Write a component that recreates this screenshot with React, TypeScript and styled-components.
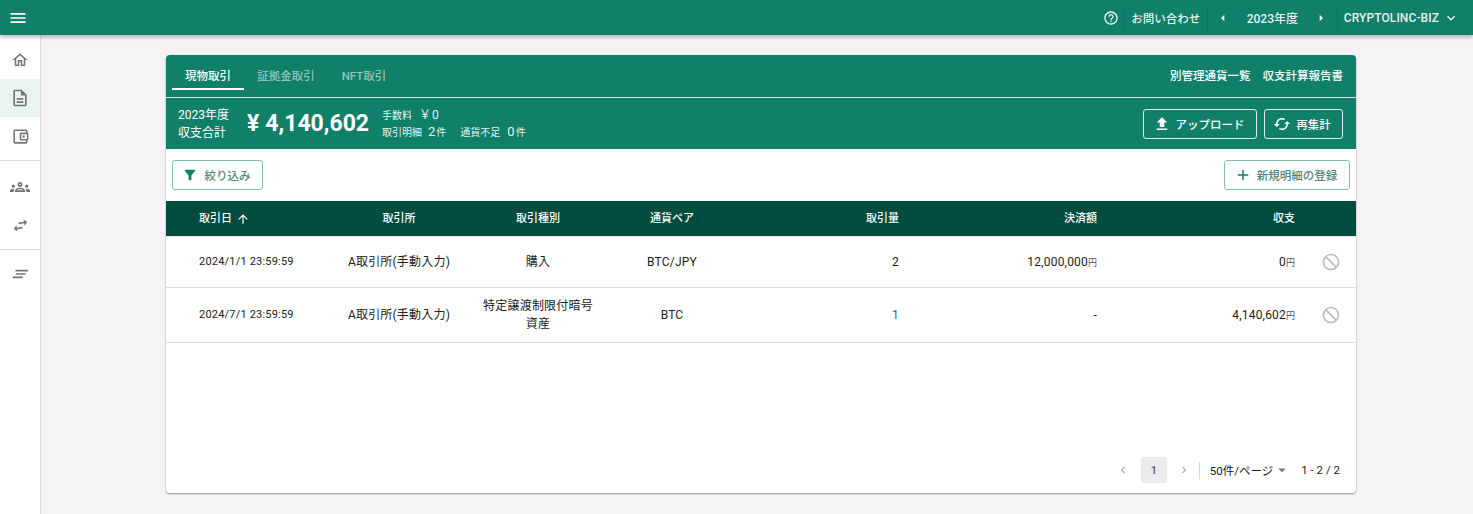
import React from "react";
import styled, { createGlobalStyle } from "styled-components";

const GREEN = "#11806a";
const DARK = "#004d40";
const FONT = `Roboto, "Noto Sans CJK JP", "Noto Sans", sans-serif`;

const Global = createGlobalStyle`
  html, body { margin: 0; padding: 0; height: 100%; background: #f4f4f4; overflow: hidden; }
  body { font-family: ${FONT}; color: #212121; }
  #root { height: 100%; }
`;

const P = {
  menu: "M3 18h18v-2H3v2zm0-5h18v-2H3v2zm0-7v2h18V6H3z",
  home: "M12 5.69l5 4.5V18h-2v-6H9v6H7v-7.81l5-4.5M12 3L2 12h3v8h6v-6h2v6h6v-8h3L12 3z",
  doc: "M8 16h8v2H8zm0-4h8v2H8zm6-10H6c-1.1 0-2 .9-2 2v16c0 1.1.89 2 1.99 2H18c1.1 0 2-.9 2-2V8l-6-6zm4 18H6V4h7v5h5v11z",
  wallet: "M21 7.28V5c0-1.1-.9-2-2-2H5c-1.11 0-2 .9-2 2v14c0 1.1.89 2 2 2h14c1.1 0 2-.9 2-2v-2.28c.59-.35 1-.98 1-1.72V9c0-.74-.41-1.37-1-1.72zM20 9v6h-7V9h7zM5 19V5h14v2h-6c-1.1 0-2 .9-2 2v6c0 1.1.9 2 2 2h6v2H5zM16 10.5a1.5 1.5 0 1 0 0 3 1.5 1.5 0 0 0 0-3z",
  groups: "M4,13c1.1,0,2-0.9,2-2c0-1.1-0.9-2-2-2s-2,0.9-2,2C2,12.1,2.9,13,4,13z M5.13,14.1C4.76,14.04,4.39,14,4,14 c-0.99,0-1.93,0.21-2.78,0.58C0.48,14.9,0,15.62,0,16.43V18l4.5,0v-1.61C4.5,15.56,4.73,14.78,5.13,14.1z M20,13c1.1,0,2-0.9,2-2 c0-1.1-0.9-2-2-2s-2,0.9-2,2C18,12.1,18.9,13,20,13z M24,16.43c0-0.81-0.48-1.53-1.22-1.85C21.93,14.21,20.99,14,20,14 c-0.39,0-0.76,0.04-1.13,0.1c0.4,0.68,0.63,1.46,0.63,2.29V18l4.5,0V16.43z M16.24,13.65c-1.17-0.52-2.61-0.9-4.24-0.9 c-1.63,0-3.07,0.39-4.24,0.9C6.68,14.13,6,15.21,6,16.39V18h12v-1.61C18,15.21,17.32,14.13,16.24,13.65z M8.07,16 c0.09-0.23,0.13-0.39,0.91-0.69c0.97-0.38,1.99-0.56,3.02-0.56s2.05,0.18,3.02,0.56c0.77,0.3,0.81,0.46,0.91,0.69H8.07z M12,8 c0.55,0,1,0.45,1,1s-0.45,1-1,1s-1-0.45-1-1S11.45,8,12,8 M12,6c-1.66,0-3,1.34-3,3c0,1.66,1.34,3,3,3s3-1.34,3-3 C15,7.34,13.66,6,12,6L12,6z",
  swap: "M6.99 11L3 15l3.99 4v-3H14v-2H6.99v-3zM21 9l-4-4v3h-7v2h7v3l4-4z",
  notes: "M5 17h12v-2H5v2zm2-4h12v-2H7v2zm-2-6v2h15V7H5z",
  help: "M11 18h2v-2h-2v2zm1-16C6.48 2 2 6.48 2 12s4.48 10 10 10 10-4.48 10-10S17.52 2 12 2zm0 18c-4.41 0-8-3.59-8-8s3.59-8 8-8 8 3.59 8 8-3.59 8-8 8zm0-14c-2.21 0-4 1.79-4 4h2c0-1.1.9-2 2-2s2 .9 2 2c0 2-3 1.75-3 5h2c0-2.25 3-2.5 3-5 0-2.21-1.79-4-4-4z",
  left: "M14 7l-5 5 5 5V7z",
  right: "M10 17l5-5-5-5v10z",
  down: "M7.41 8.59L12 13.17l4.59-4.58L18 10l-6 6-6-6 1.41-1.41z",
  upload: "M5 20h14v-2H5v2zm0-10h4v6h6v-6h4l-7-7-7 7z",
  cached: "M19 8l-4 4h3c0 3.31-2.69 6-6 6-1.01 0-1.97-.25-2.8-.7l-1.46 1.46C8.97 19.54 10.43 20 12 20c4.42 0 8-3.58 8-8h3l-4-4zM6 12c0-3.31 2.69-6 6-6 1.01 0 1.97.25 2.8.7l1.46-1.46C15.03 4.46 13.57 4 12 4c-4.42 0-8 3.58-8 8H1l4 4 4-4H6z",
  filter: "M4.25 5.61C6.27 8.2 10 13 10 13v6c0 .55.45 1 1 1h2c.55 0 1-.45 1-1v-6s3.72-4.8 5.74-7.39c.51-.66.04-1.61-.79-1.61H5.04c-.83 0-1.3.95-.79 1.61z",
  plus: "M19 13h-6v6h-2v-6H5v-2h6V5h2v6h6v2z",
  up: "M4 12l1.41 1.41L11 7.83V20h2V7.83l5.58 5.59L20 12l-8-8-8 8z",
  banned: "M12 2C6.48 2 2 6.48 2 12s4.48 10 10 10 10-4.48 10-10S17.52 2 12 2zm0 18c-4.42 0-8-3.58-8-8 0-1.85.63-3.55 1.69-4.9L16.9 18.31C15.55 19.37 13.85 20 12 20zm6.31-3.1L7.1 5.69C8.45 4.63 10.15 4 12 4c4.42 0 8 3.58 8 8 0 1.85-.63 3.55-1.69 4.9z",
  chevL: "M15.41 7.41L14 6l-6 6 6 6 1.41-1.41L10.83 12z",
  chevR: "M10 6L8.59 7.41 13.17 12l-4.58 4.59L10 18l6-6z",
  caret: "M7 10l5 5 5-5z",
};

const Svg = styled.svg<{ $size: number; $color?: string }>`
  width: ${(p) => p.$size}px;
  height: ${(p) => p.$size}px;
  fill: ${(p) => p.$color || "currentColor"};
  flex: none;
  display: block;
`;

const Icon = ({ d, size = 24, color }: { d: string; size?: number; color?: string }) => (
  <Svg viewBox="0 0 24 24" $size={size} $color={color}>
    <path d={d} />
  </Svg>
);

const Page = styled.div`
  width: 1473px;
  height: 514px;
  display: flex;
  flex-direction: column;
  overflow: hidden;
`;

const TopBar = styled.header`
  height: 35px;
  flex: none;
  background: ${GREEN};
  color: #fff;
  display: flex;
  align-items: center;
  justify-content: space-between;
  padding: 0 14px 0 8px;
  box-shadow: 0 2px 4px rgba(0, 0, 0, 0.3);
  position: relative;
  z-index: 2;
`;

const TopRight = styled.div`
  display: flex;
  align-items: center;
  height: 100%;
`;

const TopItem = styled.div<{ $w?: number; $border?: boolean }>`
  height: 26px;
  box-sizing: border-box;
  display: flex;
  align-items: center;
  justify-content: center;
  font-size: 11.5px;
  font-weight: 500;
  color: rgba(255, 255, 255, 0.92);
  ${(p) => (p.$w ? `width: ${p.$w}px;` : "")}
  ${(p) => (p.$border ? "border-left: 1px solid rgba(0,0,0,0.12);" : "")}
`;

const YearText = styled.span`
  width: 82px;
  text-align: center;
  font-size: 12px;
`;

const ClientName = styled.span`
  margin: 0 4px 0 6px;
  font-size: 12px;
  letter-spacing: 0.08px;
`;

const Body = styled.div`
  flex: 1;
  display: flex;
  min-height: 0;
`;

const Side = styled.nav`
  width: 40px;
  flex: none;
  background: #fff;
  border-right: 1px solid #dcdcdc;
  display: flex;
  flex-direction: column;
  padding-top: 6px;
`;

const SideItem = styled.div<{ $active?: boolean }>`
  height: 38px;
  display: flex;
  align-items: center;
  justify-content: center;
  background: ${(p) => (p.$active ? "#e9f3f1" : "transparent")};
  color: #757575;
`;

const SideRule = styled.hr<{ $after: number }>`
  border: 0;
  border-top: 1px solid #dedede;
  margin: 5px 0 ${(p) => p.$after}px;
  width: 100%;
`;

const Tilt = styled.span`
  display: block;
  transform: rotate(-9deg);
`;

const Slant = styled.span`
  display: block;
  transform: skewX(-22deg);
`;

const Main = styled.main`
  flex: 1;
  padding: 20px 117px 21px 125px;
  min-width: 0;
`;

const Card = styled.section`
  height: 438px;
  background: #fff;
  border-radius: 4px;
  box-shadow: 0 1px 2px rgba(0, 0, 0, 0.4);
  display: flex;
  flex-direction: column;
  overflow: hidden;
`;

const TabsRow = styled.div`
  height: 43px;
  box-sizing: border-box;
  flex: none;
  background: ${GREEN};
  border-bottom: 1px solid rgba(255, 255, 255, 0.8);
  display: flex;
  align-items: flex-end;
  justify-content: space-between;
  padding: 0 13px 0 6px;
  color: #fff;
`;

const Tabs = styled.div`
  display: flex;
  gap: 6px;
  padding-bottom: 7px;
`;

const Tab = styled.div<{ $active?: boolean }>`
  height: 34px;
  width: 72px;
  box-sizing: border-box;
  padding-top: 6px;
  display: flex;
  align-items: center;
  justify-content: center;
  font-size: 11.5px;
  font-weight: 500;
  color: ${(p) => (p.$active ? "#fff" : "rgba(255,255,255,0.55)")};
  border-bottom: 2px solid ${(p) => (p.$active ? "#fff" : "transparent")};
`;

const TabLinks = styled.div`
  display: flex;
  gap: 12px;
  font-size: 11.5px;
  font-weight: 500;
  height: 42px;
  box-sizing: border-box;
  padding-bottom: 3px;
  align-items: center;
`;

const Summary = styled.div`
  height: 51px;
  box-sizing: border-box;
  flex: none;
  background: ${GREEN};
  color: #fff;
  display: flex;
  align-items: center;
  padding: 0 13px 0 12px;
`;

const SumLabel = styled.div`
  font-size: 12px;
  line-height: 18px;
  width: 69px;
`;

const SumValue = styled.div`
  font-size: 23px;
  font-weight: 700;
  width: 135px;
  white-space: nowrap;
`;

const YenMark = styled.span`
  margin-right: 6px;
`;

const SumDetail = styled.div`
  font-size: 10px;
  flex: 1;
  color: rgba(255, 255, 255, 0.92);
`;

const DetailLine = styled.div`
  display: flex;
  align-items: baseline;
  height: 19px;
`;

const Big = styled.span<{ $ml?: number; $fs?: number }>`
  font-size: ${(p) => p.$fs ?? 13}px;
  letter-spacing: 1px;
  margin-left: ${(p) => p.$ml ?? 0}px;
`;

const DetailGap = styled.span`
  margin-left: 14px;
`;

const HeadBtn = styled.button<{ $w: number }>`
  width: ${(p) => p.$w}px;
  height: 30px;
  box-sizing: border-box;
  background: transparent;
  border: 1px solid rgba(255, 255, 255, 0.85);
  border-radius: 3px;
  color: #fff;
  display: flex;
  align-items: center;
  justify-content: center;
  gap: 5px;
  font-family: inherit;
  font-size: 11.5px;
  font-weight: 500;
  margin-left: 7px;
  padding: 0 3px 0 0;
`;

const Toolbar = styled.div`
  height: 52px;
  flex: none;
  display: flex;
  align-items: center;
  justify-content: space-between;
  padding: 0 6px;
`;

const OutlineBtn = styled.button<{ $w: number; $gap: number }>`
  width: ${(p) => p.$w}px;
  height: 30px;
  box-sizing: border-box;
  background: #fff;
  border: 1px solid #7fbfb2;
  border-radius: 3px;
  color: #55857a;
  display: flex;
  align-items: center;
  justify-content: center;
  gap: ${(p) => p.$gap}px;
  font-family: inherit;
  font-size: 11.5px;
  font-weight: 500;
  padding: 0 3px 0 0;
`;

const COLS = "164px 138px 140px 128px 163px 198px 198px 61px";

const HeadRow = styled.div`
  display: grid;
  grid-template-columns: ${COLS};
  height: 36px;
  box-sizing: border-box;
  flex: none;
  background: ${DARK};
  color: #fff;
  font-size: 11px;
  font-weight: 500;
  align-items: center;
  border-bottom: 1px solid #e6e6e6;
`;

const Row = styled.div<{ $h: number }>`
  display: grid;
  grid-template-columns: ${COLS};
  height: ${(p) => p.$h}px;
  box-sizing: border-box;
  border-bottom: 1px solid #dedede;
  align-items: center;
  font-size: 12px;
  letter-spacing: 0.2px;
  color: #212121;
  flex: none;
`;

const Cell = styled.div<{ $align?: "left" | "center" | "right"; $pl?: number; $color?: string; $size?: number }>`
  text-align: ${(p) => p.$align || "center"};
  padding-left: ${(p) => p.$pl ?? 0}px;
  ${(p) => (p.$color ? `color: ${p.$color};` : "")}
  ${(p) => (p.$size ? `font-size: ${p.$size}px;` : "")}
  line-height: 18px;
`;

const HeadDate = styled(Cell)`
  display: flex;
  align-items: center;
  gap: 4px;
`;

const Yen = styled.span`
  font-size: 9px;
  letter-spacing: 0;
  color: #555;
`;

const IconCell = styled.div`
  display: flex;
  justify-content: flex-end;
  padding-right: 15px;
`;

const TypeCell = styled(Cell)`
  padding: 0 10px;
`;

const Spacer = styled.div`
  flex: 1;
`;

const Pager = styled.div`
  height: 36px;
  flex: none;
  display: flex;
  align-items: flex-start;
  justify-content: flex-end;
  padding-right: 16px;
  font-size: 11.5px;
  color: #212121;
`;

const PageBtn = styled.div`
  width: 26px;
  height: 26px;
  border-radius: 3px;
  background: #ebebeb;
  display: flex;
  align-items: center;
  justify-content: center;
  font-size: 11px;
  font-weight: 500;
  color: #555;
`;

const Arrow = styled.div<{ $ml?: number; $mr?: number }>`
  width: 18px;
  height: 26px;
  display: flex;
  align-items: center;
  justify-content: center;
  margin-left: ${(p) => p.$ml ?? 0}px;
  margin-right: ${(p) => p.$mr ?? 0}px;
`;

const PagerRule = styled.div`
  width: 1px;
  height: 17px;
  background: #d8d8d8;
  margin: 5px 10px 0 6px;
`;

const PagerText = styled.div<{ $w?: number }>`
  height: 26px;
  display: flex;
  align-items: center;
  white-space: nowrap;
  ${(p) => (p.$w ? `width: ${p.$w}px;` : "")}
`;

const rows = [
  { date: "2024/1/1 23:59:59", type: "購入", pair: "BTC/JPY", qty: "2", blue: false, pay: "12,000,000", income: "0", h: 51 },
  { date: "2024/7/1 23:59:59", type: "特定譲渡制限付暗号資産", pair: "BTC", qty: "1", blue: true, pay: "-", income: "4,140,602", h: 55 },
];

export default function App() {
  return (
    <Page>
      <Global />
      <TopBar>
        <Icon d={P.menu} size={20} />
        <TopRight>
          <TopItem $w={25}>
            <Icon d={P.help} size={16} />
          </TopItem>
          <TopItem $w={83} $border>お問い合わせ</TopItem>
          <TopItem $w={130} $border>
            <Icon d={P.left} size={16} />
            <YearText>2023年度</YearText>
            <Icon d={P.right} size={16} />
          </TopItem>
          <TopItem $border>
            <ClientName>CRYPTOLINC-BIZ</ClientName>
            <Icon d={P.down} size={16} />
          </TopItem>
        </TopRight>
      </TopBar>
      <Body>
        <Side>
          <SideItem><Icon d={P.home} size={18} /></SideItem>
          <SideItem $active><Icon d={P.doc} size={20} /></SideItem>
          <SideItem><Icon d={P.wallet} size={19} /></SideItem>
          <SideRule $after={7} />
          <SideItem><Icon d={P.groups} size={20} /></SideItem>
          <SideItem><Tilt><Icon d={P.swap} size={19} /></Tilt></SideItem>
          <SideRule $after={5} />
          <SideItem><Slant><Icon d={P.notes} size={20} /></Slant></SideItem>
        </Side>
        <Main>
          <Card>
            <TabsRow>
              <Tabs>
                <Tab $active>現物取引</Tab>
                <Tab>証拠金取引</Tab>
                <Tab>NFT取引</Tab>
              </Tabs>
              <TabLinks>
                <span>別管理通貨一覧</span>
                <span>収支計算報告書</span>
              </TabLinks>
            </TabsRow>
            <Summary>
              <SumLabel>2023年度<br />収支合計</SumLabel>
              <SumValue><YenMark>¥</YenMark>4,140,602</SumValue>
              <SumDetail>
                <DetailLine>手数料<Big $ml={7} $fs={12}>￥0</Big></DetailLine>
                <DetailLine>
                  取引明細<Big $ml={6}>2</Big>件
                  <DetailGap>通貨不足</DetailGap><Big $ml={7}>0</Big>件
                </DetailLine>
              </SumDetail>
              <HeadBtn $w={114}><Icon d={P.upload} size={18} />アップロード</HeadBtn>
              <HeadBtn $w={79}><Icon d={P.cached} size={18} />再集計</HeadBtn>
            </Summary>
            <Toolbar>
              <OutlineBtn $w={91} $gap={7}><Icon d={P.filter} size={16} color={GREEN} />絞り込み</OutlineBtn>
              <OutlineBtn $w={126} $gap={5}><Icon d={P.plus} size={18} color={GREEN} />新規明細の登録</OutlineBtn>
            </Toolbar>
            <HeadRow>
              <HeadDate $pl={33} $align="left">取引日<Icon d={P.up} size={14} /></HeadDate>
              <Cell>取引所</Cell>
              <Cell>取引種別</Cell>
              <Cell>通貨ペア</Cell>
              <Cell $align="right">取引量</Cell>
              <Cell $align="right">決済額</Cell>
              <Cell $align="right">収支</Cell>
              <div />
            </HeadRow>
            {rows.map((r) => (
              <Row key={r.date} $h={r.h}>
                <Cell $align="left" $pl={33} $size={11}>{r.date}</Cell>
                <Cell>A取引所(手動入力)</Cell>
                <TypeCell>{r.type}</TypeCell>
                <Cell>{r.pair}</Cell>
                <Cell $align="right" $color={r.blue ? "#1a5fa8" : undefined}>{r.qty}</Cell>
                <Cell $align="right">{r.pay}{r.pay !== "-" && <Yen>円</Yen>}</Cell>
                <Cell $align="right">{r.income}<Yen>円</Yen></Cell>
                <IconCell><Icon d={P.banned} size={20} color="#bdbdbd" /></IconCell>
              </Row>
            ))}
            <Spacer />
            <Pager>
              <Arrow $mr={9}><Icon d={P.chevL} size={14} color="#aaa" /></Arrow>
              <PageBtn>1</PageBtn>
              <Arrow $ml={8}><Icon d={P.chevR} size={14} color="#aaa" /></Arrow>
              <PagerRule />
              <PagerText>50件/ページ</PagerText>
              <PagerText $w={28}><Icon d={P.caret} size={18} color="#757575" /></PagerText>
              <PagerText>1 - 2 / 2</PagerText>
            </Pager>
          </Card>
        </Main>
      </Body>
    </Page>
  );
}
